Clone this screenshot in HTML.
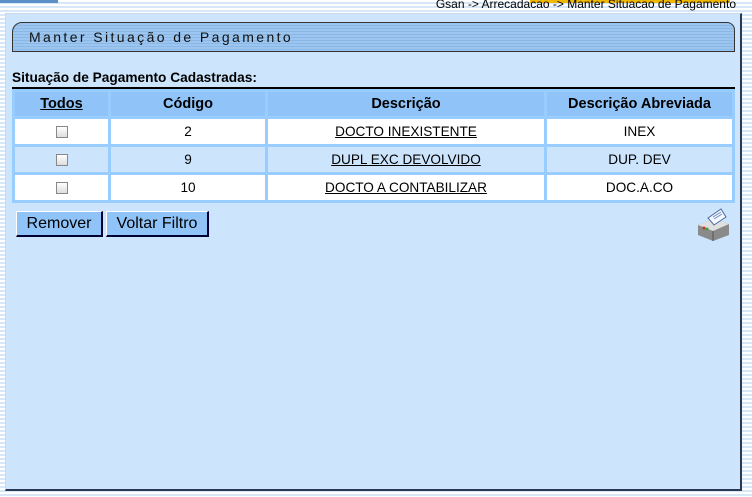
<!DOCTYPE html>
<html><head><meta charset="utf-8"><style>
*{margin:0;padding:0;box-sizing:border-box}
body{width:752px;height:497px;overflow:hidden;position:relative;font-family:"Liberation Sans",Arial,sans-serif;
background:repeating-linear-gradient(#ffffff 0 2px,#d6e8f8 2px 4px);}
.crumb{position:absolute;right:16px;top:-3px;font-size:12px;color:#000}
.tab{position:absolute;left:0;top:0;width:58px;height:3px;background:#5a8fc8}
.gold{position:absolute;left:530px;top:0;width:200px;height:3px;background:#f0b800}
.panel{position:absolute;left:5px;top:13px;width:737px;height:478px;background:#cce5fc;border:1px solid #c8d8e8;border-right:2px solid #2a3a55;border-bottom:2px solid #2a3a55}
.title{position:absolute;left:12px;top:22px;width:723px;height:30px;border:1px solid #333;border-radius:10px 8px 0 0;
background:repeating-linear-gradient(#9cc6f0 0 2px,#8ab8e6 2px 3px);font-size:14px;letter-spacing:2.4px;padding:6px 0 0 16px;color:#111}
.lbl{position:absolute;left:12px;top:70px;font-size:13.7px;font-weight:bold}
table{position:absolute;left:12px;top:87px;width:723px;border-collapse:separate;border-spacing:3px;border-top:2px solid #000;background:#99ccff;font-size:13.6px;text-align:center}
th{background:#90c4f8;height:24px;font-weight:bold;font-size:14.5px}
td{height:25px}
tr.w td{background:#fff} tr.b td{background:#cce5fc}
u{text-decoration:underline}
.cb{display:inline-block;width:12px;height:12px;border:1px solid #888;background:linear-gradient(#fff,#ddd);vertical-align:middle}
.btn{position:absolute;top:211px;height:26px;background:#90c4f8;border:1px solid #fff;border-right:2px solid #003;border-bottom:2px solid #003;font-size:16px;padding-top:3px;text-align:center}
</style></head><body>
<div class="tab"></div><div class="gold"></div>
<div class="crumb">Gsan -&gt; Arrecadacao -&gt; Manter Situacao de Pagamento</div>
<div class="panel"></div>
<div class="title">Manter Situação de Pagamento</div>
<div class="lbl">Situação de Pagamento Cadastradas:</div>
<table>
<tr><th style="width:93px"><u>Todos</u></th><th style="width:154px">Código</th><th style="width:276px">Descrição</th><th>Descrição Abreviada</th></tr>
<tr class="w"><td><span class="cb"></span></td><td>2</td><td><u>DOCTO INEXISTENTE</u></td><td>INEX</td></tr>
<tr class="b"><td><span class="cb"></span></td><td>9</td><td><u>DUPL EXC DEVOLVIDO</u></td><td>DUP. DEV</td></tr>
<tr class="w"><td><span class="cb"></span></td><td>10</td><td><u>DOCTO A CONTABILIZAR</u></td><td>DOC.A.CO</td></tr>
</table>
<div class="btn" style="left:16px;width:87px">Remover</div>
<div class="btn" style="left:106px;width:103px">Voltar Filtro</div>
<svg style="position:absolute;left:696px;top:206px" width="36" height="36" viewBox="0 0 36 36">
<path d="M2 19 L18 13 L33 18 L33 29 L17 35 L2 29Z" fill="#8a8a8a"/>
<path d="M2 19 L17 25 L33 18 L18 13Z" fill="#e0e0e0"/>
<path d="M17 25 L17 35" stroke="#555"/>
<path d="M12 12 L25 3 L30 11 L18 19Z" fill="#f4f8ff" stroke="#4a6aa0"/>
<path d="M17 11 L25 6 M18 13 L26 8" stroke="#6a8ac0"/>
<circle cx="8" cy="22" r="1.5" fill="#c33"/><circle cx="11" cy="23" r="1.5" fill="#3a3"/>
</svg>
</body></html>
